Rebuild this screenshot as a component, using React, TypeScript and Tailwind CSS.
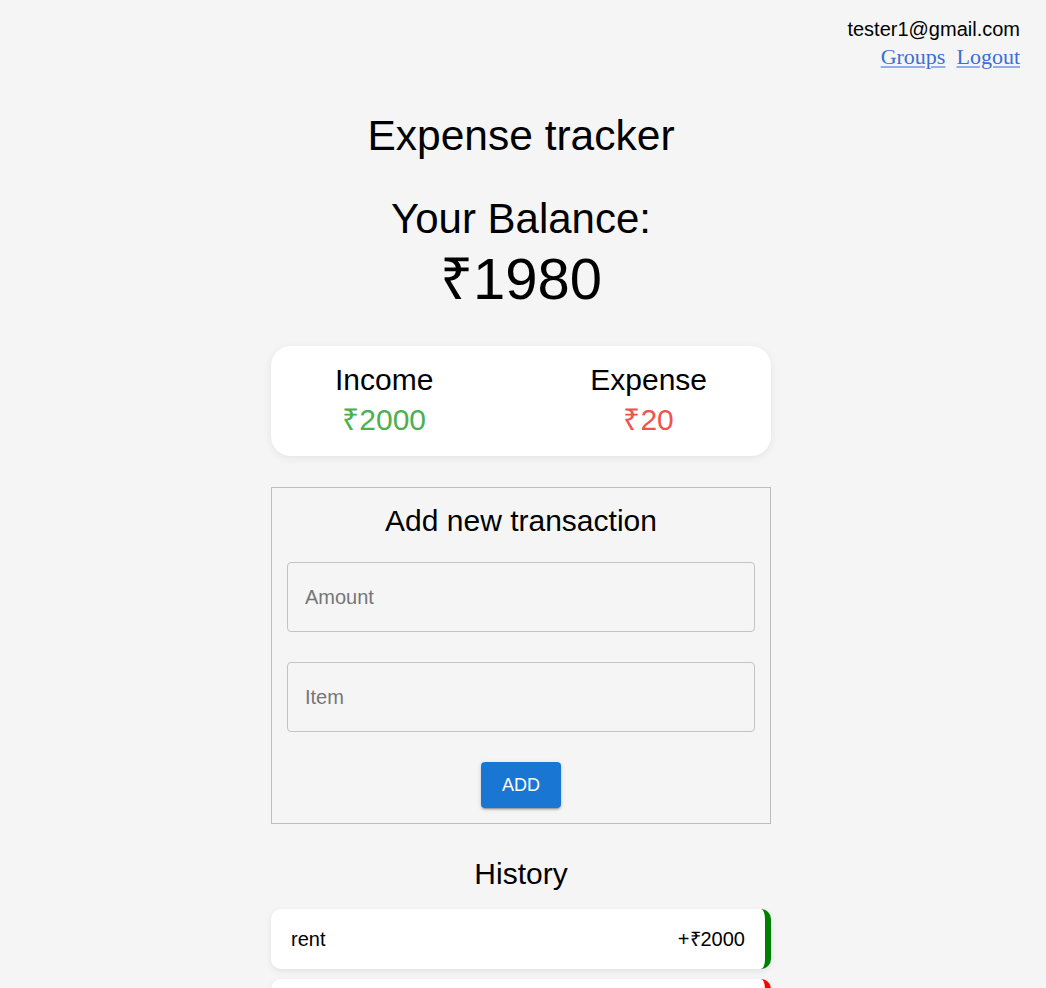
import { useState } from 'react';

type Txn = {
  id: number;
  text: string;
  amount: number;
};

const initial: Txn[] = [
  { id: 1, text: 'rent', amount: 2000 },
  { id: 2, text: 'food', amount: -20 },
];

export default function App() {
  const [txns] = useState<Txn[]>(initial);
  const [amount, setAmount] = useState('');
  const [item, setItem] = useState('');

  const income = txns.filter((t) => t.amount > 0).reduce((s, t) => s + t.amount, 0);
  const expense = txns.filter((t) => t.amount < 0).reduce((s, t) => s - t.amount, 0);

  return (
    <div className="min-h-screen w-full bg-[#f5f5f5] font-['Liberation_Sans',Arial,sans-serif] text-black">
      {/* top bar */}
      <div className="flex flex-col items-end pt-[18px] pr-[26px]">
        <div className="text-[20px] leading-[23px]">tester1@gmail.com</div>
        <div className="mt-[4px] flex gap-[11px] font-['Liberation_Serif',serif] text-[22px] leading-[24px] text-[#3a6fd5]">
          <a href="#" className="underline decoration-[#8fb0ea]">Groups</a>
          <a href="#" className="underline decoration-[#8fb0ea]">Logout</a>
        </div>
      </div>

      <div className="flex flex-col items-center pr-[4px]">
        <h1 className="mt-[43px] text-[42.5px] leading-[48px]">Expense tracker</h1>
        <h2 className="mt-[35px] text-[42px] leading-[48px]">Your Balance:</h2>
        <div className="mt-[2px] text-[58px] leading-[67px]">₹{income - expense}</div>

        {/* income / expense */}
        <div className="mt-[34px] flex w-[500px] justify-between rounded-[20px] bg-white px-16 pt-[17px] pb-[19px] shadow-[0_2px_8px_rgba(0,0,0,0.07)]">
          <div className="flex flex-col items-center gap-[6px]">
            <span className="text-[30px] leading-[34px]">Income</span>
            <span className="text-[30px] leading-[34px] text-[#4caf50]">₹{income}</span>
          </div>
          <div className="flex flex-col items-center gap-[6px]">
            <span className="text-[30px] leading-[34px]">Expense</span>
            <span className="text-[30px] leading-[34px] text-[#ef5350]">₹{expense}</span>
          </div>
        </div>

        {/* add form */}
        <div className="mt-[31px] flex w-[500px] flex-col items-center border border-[#bdbdbd] px-[15px] pt-[15px] pb-[15px]">
          <h3 className="text-[30px] leading-[35px]">Add new transaction</h3>
          <input
            value={amount}
            onChange={(e) => setAmount(e.target.value)}
            placeholder="Amount"
            className="mt-[24px] h-[70px] w-full rounded-[4px] border border-[#c4c4c4] bg-transparent px-[17px] text-[20px] outline-none placeholder:text-[#767676]"
          />
          <input
            value={item}
            onChange={(e) => setItem(e.target.value)}
            placeholder="Item"
            className="mt-[30px] h-[70px] w-full rounded-[4px] border border-[#c4c4c4] bg-transparent px-[17px] text-[20px] outline-none placeholder:text-[#767676]"
          />
          <button className="mt-[30px] h-[46px] w-[80px] rounded-[4px] bg-[#1976d2] text-[18px] text-white shadow-[0_3px_1px_-2px_rgba(0,0,0,0.2),0_2px_2px_rgba(0,0,0,0.14),0_1px_5px_rgba(0,0,0,0.12)]">
            ADD
          </button>
        </div>

        {/* history */}
        <h3 className="mt-[32px] text-[30px] leading-[35px]">History</h3>
        <ul className="mt-[18px] flex w-[500px] flex-col gap-[10px] pb-10">
          {txns.map((t) => (
            <li
              key={t.id}
              className={
                t.amount > 0
                  ? 'flex h-[60px] items-center justify-between rounded-[10px] border-r-[6px] border-[#008000] bg-white pl-5 pr-5 text-[20px] shadow-[0_2px_6px_rgba(0,0,0,0.08)]'
                  : 'flex h-[60px] items-center justify-between rounded-[10px] border-r-[6px] border-[#ff0000] bg-white pl-5 pr-5 text-[20px] shadow-[0_2px_6px_rgba(0,0,0,0.08)]'
              }
            >
              <span>{t.text}</span>
              <span>
                {t.amount > 0 ? '+' : '-'}₹{Math.abs(t.amount)}
              </span>
            </li>
          ))}
        </ul>
      </div>
    </div>
  );
}
